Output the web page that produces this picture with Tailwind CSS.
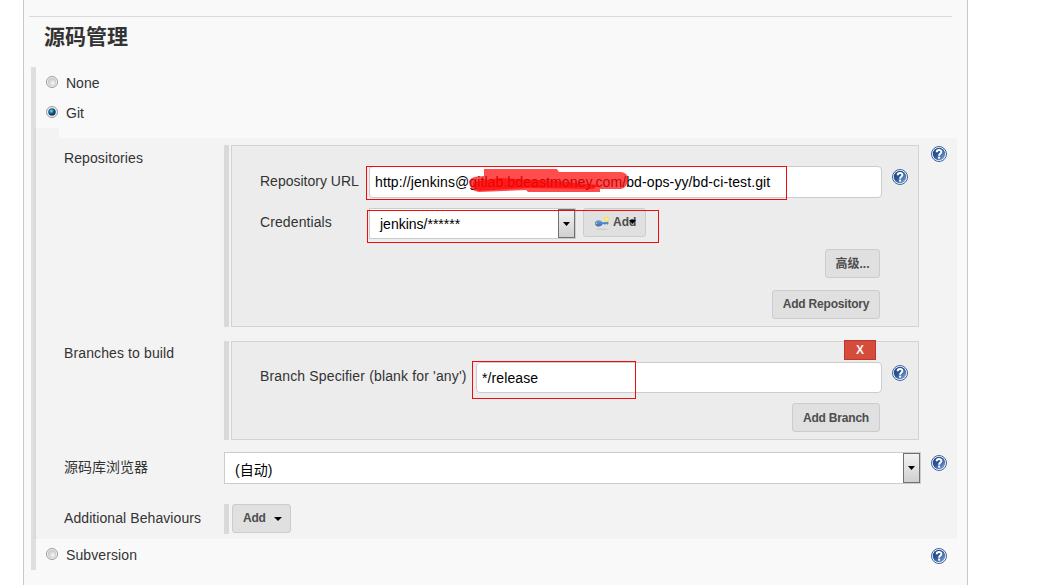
<!DOCTYPE html>
<html lang="zh">
<head>
<meta charset="utf-8">
<title>源码管理</title>
<script src="https://cdn.jsdelivr.net/npm/@tailwindcss/browser@4"></script>
</head>
<body class="w-[1037px] h-[585px] overflow-hidden bg-white font-['Liberation_Sans','Noto_Sans_CJK_SC',sans-serif] text-[14px] leading-[20px] text-[#333]">
<svg width="0" height="0" class="absolute">
  <defs>
    <linearGradient id="hg" x1="0" y1="0" x2="1" y2="1"><stop offset="0" stop-color="#1f4583"/><stop offset=".45" stop-color="#2b5596"/><stop offset="1" stop-color="#8fb2dd"/></linearGradient>
    <radialGradient id="rg" cx=".6" cy=".65"><stop offset="0" stop-color="#f8f8f8"/><stop offset="1" stop-color="#ced0d2"/></radialGradient>
    <radialGradient id="bg" cx=".4" cy=".35"><stop offset="0" stop-color="#8fdcf7"/><stop offset=".5" stop-color="#1c86bd"/><stop offset="1" stop-color="#0d3a60"/></radialGradient>
    <linearGradient id="kg" x1="0" y1="0" x2="0" y2="1"><stop offset="0" stop-color="#6fa0d8"/><stop offset="1" stop-color="#3a6cab"/></linearGradient>
    <symbol id="help" viewBox="0 0 16 16"><circle cx="8" cy="8" r="7.5" fill="#fff" stroke="#3a64a0" stroke-width="1"/><circle cx="8" cy="8" r="6.2" fill="url(#hg)"/><path d="M5.7 6.2C5.7 3.2 10.5 3.3 10.4 6C10.3 7.6 8.1 7.7 8.1 9.7" fill="none" stroke="#fff" stroke-width="2"/><rect x="7.1" y="10.6" width="2" height="2" fill="#fff"/></symbol>
    <symbol id="off" viewBox="0 0 12 12"><circle cx="6" cy="6" r="5.5" fill="#fafafa" stroke="#989898"/><circle cx="6" cy="6" r="3.9" fill="url(#rg)" stroke="#c2c4c6" stroke-width=".6"/></symbol>
    <symbol id="on" viewBox="0 0 12 12"><circle cx="6" cy="6" r="5.5" fill="#f2f2f2" stroke="#989898"/><circle cx="6" cy="6" r="3.5" fill="url(#bg)" stroke="#163a58" stroke-width=".5"/></symbol>
  </defs>
</svg>
<main class="ml-[23px] w-[945px] h-[585px] border-x border-[#c8c8c8] bg-[#f9f9f9] pt-4 flex flex-col">
  <div class="ml-[5px] w-[923px] h-px shrink-0 bg-[#dadada]"></div>
  <h1 class="h-[50px] shrink-0 pl-5 pt-[5px] text-[21px] leading-[30px] font-bold">源码管理</h1>

  <section class="ml-[7px] h-[61px] shrink-0 border-l-[5px] border-[#dfdfdf] pl-[10px]">
    <label class="flex h-[30px] items-center gap-2 pt-[2px]"><svg class="size-3 -mt-[2px]"><use href="#off"/></svg>None</label>
    <label class="flex h-[30px] items-center gap-2 pt-[2px]"><svg class="size-3 -mt-[2px]"><use href="#on"/></svg>Git</label>
  </section>

  <section class="ml-[7px] h-[411px] w-[926px] shrink-0 flex">
    <div class="w-[5px] shrink-0 bg-[#d9d9d9] border-l-[3px] border-[#dfdfdf]"></div>
    <div class="w-[921px]">
      <div class="h-[10px] w-[23px] bg-[#f3f3f3]"></div>
      <div class="h-[401px] bg-[#f3f3f3] pl-7 pt-[7px]">

        <div class="flex h-[196px]">
          <div class="w-[160px] pt-[3px] tracking-[0.1px]">Repositories</div>
          <div class="w-[5px] h-[182px] bg-[#d9d9d9] mr-[2px]"></div>
          <div class="w-[688px] h-[182px] border border-[#d3d3d3] bg-[#ececec] pl-7 pt-5">
            <div class="flex h-[42px]">
              <div class="w-[109px] pt-[5px] whitespace-nowrap">Repository URL</div>
              <div class="relative w-[513px] h-[32px] rounded-[4px] border border-[#ccc] bg-white pl-[5px] leading-[31px] text-black tracking-[0.1px]">http://jenkins@gitlab.bdeastmoney.com/bd-ops-yy/bd-ci-test.git
                <svg class="absolute left-[97px] top-[1px] w-[164px] h-[28px]" viewBox="0 0 164 28"><path d="M17 1L90 1Q91 3 92 4L154 4Q161 5 161 11Q161 19 154 21L133 21L133 24L61 24L59 22L12 24Q3 23 2 14Q3 8 17 8Z" fill="#ff0909" fill-opacity=".73"/><path d="M6 14L32 10L90 13L132 17L126 21L60 20L12 23Q5 21 6 14Z" fill="#ff0000" fill-opacity=".65"/></svg>
                <div class="absolute -left-[4px] -top-[1px] w-[421px] h-[34px] border border-[#f00c0c]"></div>
              </div>
              <svg class="size-4 ml-[10px] mt-[3px]"><use href="#help"/></svg>
            </div>
            <div class="flex h-[41px]">
              <div class="w-[109px] pt-1 tracking-[0.1px]">Credentials</div>
              <div class="relative flex w-[207px] h-[31px] border border-[#ccc] bg-white pl-[10px] text-black leading-[31px]"><span class="grow">jenkins/******</span>
                <span class="w-[17px] h-[29px] border border-[#707070] bg-gradient-to-b from-[#f3f3f3] to-[#d0d0d0] flex items-center justify-center"><svg class="w-[7px] h-1" viewBox="0 0 7 4"><path d="M0 0H7L3.5 4Z"/></svg></span>
                <div class="absolute z-10 -left-[3px] top-[1px] w-[292px] h-[33px] border border-[#f00c0c]"></div>
              </div>
              <div class="relative ml-[7px] w-[63px] h-[29px] rounded-[3px] border border-[#ccc] bg-[#e0e0e0] flex items-center pl-[10px] text-[12px] font-bold text-[#4d4d4d]">
                <svg class="w-4 h-4 mr-[3px]" viewBox="0 0 16 16"><ellipse cx="8" cy="14.2" rx="6" ry=".7" fill="#cdcdcd"/><path d="M4.2 5.2C6.6 5 7.8 6 8.3 7.2L14.5 6.7V8.5L13.5 9.7L12.2 8.8L11 9.8L9.8 9L8.3 9.6C7.5 11 6 11.7 4.2 11.5C0 11.2 0 5.5 4.2 5.2Z" fill="url(#kg)"/><ellipse cx="2.7" cy="8.4" rx=".6" ry=".8" fill="#b5cce6"/><circle cx="12.5" cy="4" r="2.5" fill="#f3e25a"/><circle cx="12.5" cy="4" r="1.1" fill="#fff6a5"/></svg><span class="-mt-[1px]">Add</span>
                <svg class="absolute left-[45px] top-[11px] w-[7px] h-1" viewBox="0 0 7 4"><path d="M0 0H7L3.5 4Z"/></svg>
              </div>
            </div>
            <div class="flex flex-col items-end gap-3 w-[620px]">
              <button class="w-[55px] h-[29px] rounded-[3px] border border-[#ccc] bg-[#e0e0e0] text-[12px] leading-[29px] font-bold text-[#4d4d4d]">高级...</button>
              <button class="w-[108px] h-[29px] rounded-[3px] border border-[#ccc] bg-[#e0e0e0] text-[12px] leading-[25px] font-bold text-[#4d4d4d] tracking-[-0.2px]">Add Repository</button>
            </div>
          </div>
          <svg class="size-4 ml-3 mt-[1px]"><use href="#help"/></svg>
        </div>

        <div class="flex h-[111px]">
          <div class="w-[160px] pt-[2px] tracking-[0.12px]">Branches to build</div>
          <div class="w-[5px] h-[99px] bg-[#d9d9d9] mr-[2px]"></div>
          <div class="relative w-[688px] h-[99px] border border-[#d3d3d3] bg-[#ececec] pl-7 pt-5">
            <button class="absolute left-[612px] -top-[2px] w-8 h-5 border border-[#bd362f] bg-[#d54c3b] text-[12px] leading-[18px] font-bold text-[#f2f2f2]">X</button>
            <div class="flex h-[41px]">
              <div class="w-[216px] pt-[4px] whitespace-nowrap tracking-[0.15px]">Branch Specifier (blank for 'any')</div>
              <div class="relative w-[406px] h-[31px] rounded-[4px] border border-[#ccc] bg-white pl-[5px] leading-[31px] text-black tracking-[0.1px]">*/release
                <div class="absolute -left-[5px] -top-[2px] w-[164px] h-[38px] border border-[#f00c0c]"></div>
              </div>
              <svg class="size-4 ml-[10px] mt-[3px]"><use href="#help"/></svg>
            </div>
            <button class="block ml-[532px] w-[88px] h-[29px] rounded-[3px] border border-[#ccc] bg-[#e0e0e0] text-[12px] leading-[28px] font-bold text-[#4d4d4d] tracking-[-0.2px]">Add Branch</button>
          </div>
        </div>

        <div class="flex h-[52px]">
          <div class="w-[160px] pt-[5px]">源码库浏览器</div>
          <div class="flex w-[697px] h-[32px] border border-[#ccc] bg-white pl-[10px] text-black leading-[34px]"><span class="grow">(自动)</span>
            <span class="w-[17px] h-[30px] border border-[#707070] bg-gradient-to-b from-[#f3f3f3] to-[#d0d0d0] flex items-center justify-center"><svg class="w-[7px] h-1" viewBox="0 0 7 4"><path d="M0 0H7L3.5 4Z"/></svg></span>
          </div>
          <svg class="size-4 ml-[10px] mt-[3px]"><use href="#help"/></svg>
        </div>

        <div class="flex h-[30px]">
          <div class="w-[160px] pt-1 tracking-[0.08px]">Additional Behaviours</div>
          <div class="w-[5px] h-[30px] bg-[#d9d9d9] mr-[3px]"></div>
          <div class="w-[59px] h-[29px] rounded-[3px] border border-[#ccc] bg-[#e0e0e0] flex items-center pl-[10px] text-[12px] font-bold text-[#4d4d4d]"><span class="-mt-[1px] tracking-[-0.2px]">Add</span><svg class="ml-[8px] w-2 h-1" viewBox="0 0 8 4"><path d="M0 0H8L4 4Z" fill="#000"/></svg></div>
        </div>
      </div>
    </div>
  </section>

  <section class="ml-[7px] h-[31px] w-[916px] shrink-0 border-l-[5px] border-[#dfdfdf] pl-[10px] flex justify-between">
    <label class="flex h-[30px] items-center gap-2 pt-[2px] tracking-[0.1px]"><svg class="size-3 -mt-[2px]"><use href="#off"/></svg>Subversion</label>
    <svg class="size-4 mt-[9px]"><use href="#help"/></svg>
  </section>
</main>
</body>
</html>
